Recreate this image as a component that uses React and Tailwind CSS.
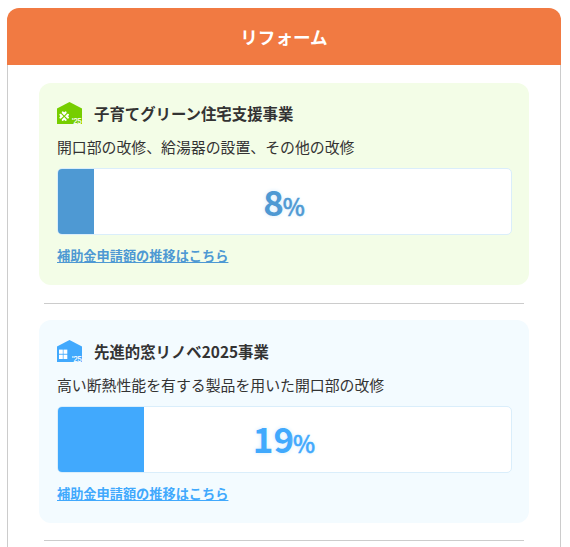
function HouseIcon({ color, kind }) {
  return (
    <svg width="25" height="22" viewBox="0 0 25 22" className="block shrink-0 overflow-visible">
      <path d="M12.5 0 L25 6.6 V22 H0 V6.6 Z" fill={color} />
      {kind === "clover" ? (
        <g fill="#fff" transform="translate(7.2 14.2)">
          <path d="M0 -0.8 L-2.4 -3.2 Q-2.7 -4.8 -1.4 -4.9 L0 -3.9 L1.4 -4.9 Q2.7 -4.8 2.4 -3.2 Z" />
          <path d="M0 -0.8 L-2.4 -3.2 Q-2.7 -4.8 -1.4 -4.9 L0 -3.9 L1.4 -4.9 Q2.7 -4.8 2.4 -3.2 Z" transform="rotate(90)" />
          <path d="M0 -0.8 L-2.4 -3.2 Q-2.7 -4.8 -1.4 -4.9 L0 -3.9 L1.4 -4.9 Q2.7 -4.8 2.4 -3.2 Z" transform="rotate(180)" />
          <path d="M0 -0.8 L-2.4 -3.2 Q-2.7 -4.8 -1.4 -4.9 L0 -3.9 L1.4 -4.9 Q2.7 -4.8 2.4 -3.2 Z" transform="rotate(270)" />
        </g>
      ) : (
        <g fill="#fff">
          <rect x="2" y="9.6" width="3.8" height="4.2" />
          <rect x="6.5" y="9.6" width="3.8" height="4.2" />
          <rect x="2" y="14.7" width="3.8" height="4.3" />
          <rect x="6.5" y="14.7" width="3.8" height="4.3" />
        </g>
      )}
      <text
        x="15"
        y="21.6"
        fontSize="8.4"
        textLength="9.6"
        lengthAdjust="spacingAndGlyphs"
        fill="#fff"
        className="font-['Liberation_Sans',sans-serif]"
        stroke="#fff"
        strokeWidth="0.2"
      >
        '25
      </text>
    </svg>
  );
}

function Program({ kind, title, description, percent, barWidth, color, boxClass, valueClass, textClass, barClass }) {
  return (
    <section className={`rounded-[12px] px-[18px] ${boxClass}`}>
      <div className="mb-2 flex h-[26px] items-center gap-3">
        <HouseIcon kind={kind} color={color} />
        <h3 className="text-[15.4px] leading-[26px] font-bold text-[#333]">{title}</h3>
      </div>
      <p className="text-[14.88px] leading-[26px] text-[#333]">{description}</p>
      <div className="relative mt-2 flex h-[67px] w-[455px] items-center justify-center overflow-hidden rounded-[5px] border border-[#daeefb] bg-white">
        <div className={`absolute inset-y-0 left-0 ${barClass}`} style={{ width: barWidth }} />
        <p className={`relative text-[35px] leading-[52px] font-bold [text-shadow:0_0_4px_#d5ebfb] ${valueClass} ${textClass}`}>
          {percent}
          <span className="-ml-px text-[23.5px] font-medium [-webkit-text-stroke:0.5px_currentColor]">%</span>
        </p>
      </div>
      <a href="#" className={`mt-[11px] block w-fit text-[13.2px] leading-[20px] font-bold underline ${textClass}`}>
        補助金申請額の推移はこちら
      </a>
    </section>
  );
}

export default function App() {
  return (
    <div className="h-[547px] overflow-hidden bg-white pt-2 pl-[7px] font-['Noto_Sans_CJK_JP',sans-serif]">
      <main className="w-[554px]">
        <h2 className="flex h-[57px] items-center justify-center rounded-t-[12px] bg-[#f17a42] pt-px text-[17.6px] font-bold text-white">
          リフォーム
        </h2>
        <div className="h-[500px] border-x border-[#ccc] px-[31px] pt-[18px]">
          <Program
            kind="clover"
            title="子育てグリーン住宅支援事業"
            description="開口部の改修、給湯器の設置、その他の改修"
            percent={8}
            barWidth={36}
            color="#76ce00"
            boxClass="h-[202px] bg-[#f3fde7] pt-[17px]"
            valueClass="pt-[3px] pr-px"
            textClass="text-[#4e99d3]"
            barClass="bg-[#4e99d3]"
          />
          <hr className="mx-[5px] mt-[18px] mb-4 border-[#ccc]" />
          <Program
            kind="window"
            title="先進的窓リノベ2025事業"
            description="高い断熱性能を有する製品を用いた開口部の改修"
            percent={19}
            barWidth={86}
            color="#41a9fd"
            boxClass="h-[203px] bg-[#f3fbff] pt-[18px]"
            valueClass="pt-px pr-px"
            textClass="text-[#41a9fd]"
            barClass="bg-[#41a9fd]"
          />
          <hr className="mx-[5px] mt-[17px] border-[#ccc]" />
        </div>
      </main>
    </div>
  );
}
